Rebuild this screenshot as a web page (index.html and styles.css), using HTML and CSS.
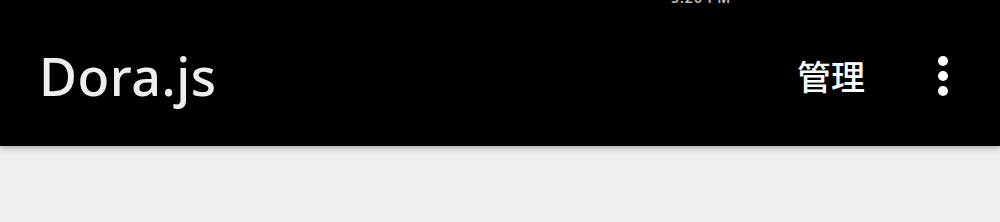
FILE: index.html
```html
<!DOCTYPE html>
<html lang="zh">
<head>
  <meta charset="UTF-8">
  <title>Dora.js</title>
  <link rel="stylesheet" href="styles.css">
</head>
<body>
  <div class="appbar">
    <div class="status-strip">
      <span class="status-text">5:26 PM</span>
    </div>
    <div class="toolbar">
      <span class="app-title">Dora.js</span>
      <div class="actions">
        <span class="action-label">管理</span>
        <span class="overflow-btn">
          <svg width="12" height="42" viewBox="0 0 12 42">
            <circle cx="6" cy="6" r="5" fill="#fff"/>
            <circle cx="6" cy="21" r="5" fill="#fff"/>
            <circle cx="6" cy="36" r="5" fill="#fff"/>
          </svg>
        </span>
      </div>
    </div>
  </div>
  <div class="content"></div>
</body>
</html>
```

FILE: styles.css
```css
body {
  margin: 0;
  background: #efefef;
  font-family: "Noto Sans", sans-serif;
  height: 222px;
  overflow: hidden;
}
.appbar {
  background: #000;
  height: 146px;
  box-shadow: 0 2px 6px rgba(0, 0, 0, 0.3);
  position: relative;
  z-index: 1;
}
.status-strip {
  height: 5px;
  overflow: hidden;
  display: flex;
  justify-content: flex-start;
  align-items: flex-end;
  padding-left: 671px;
}
.status-text {
  color: #bbb;
  font-size: 14px;
  line-height: 14px;
  letter-spacing: 1px;
  font-weight: 600;
  flex-shrink: 0;
}
.toolbar {
  display: flex;
  align-items: center;
  justify-content: space-between;
  height: 141px;
  padding: 0 51px 0 39px;
  box-sizing: border-box;
}
.app-title {
  color: #eee;
  font-size: 52px;
  font-weight: 500;
  letter-spacing: 0.5px;
}
.actions {
  display: flex;
  align-items: center;
  gap: 72px;
}
.action-label {
  color: #fff;
  font-family: "Noto Sans CJK SC", sans-serif;
  font-size: 34px;
  font-weight: 500;
}
.overflow-btn {
  display: flex;
}
.content {
  height: 76px;
}
```
